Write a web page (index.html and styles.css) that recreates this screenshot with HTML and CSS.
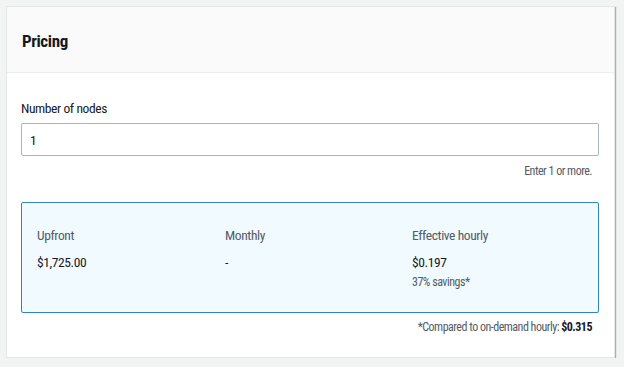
FILE: index.html
```html
<!DOCTYPE html>
<html lang="en">
<head>
    <meta charset="UTF-8">
    <title>Pricing</title>
    <link rel="stylesheet" href="styles.css">
</head>
<body>
    <section class="card">
        <header class="card-header">
            <h2>Pricing</h2>
        </header>
        <div class="card-body">
            <label class="field-label" for="nodes">Number of nodes</label>
            <input id="nodes" class="field-input" type="text" value="1">
            <div class="field-hint">Enter 1 or more.</div>

            <div class="summary">
                <div class="summary-col">
                    <div class="summary-label">Upfront</div>
                    <div class="summary-value">$1,725.00</div>
                </div>
                <div class="summary-col">
                    <div class="summary-label">Monthly</div>
                    <div class="summary-value">-</div>
                </div>
                <div class="summary-col">
                    <div class="summary-label">Effective hourly</div>
                    <div class="summary-value">$0.197</div>
                    <div class="summary-note">37% savings*</div>
                </div>
            </div>

            <div class="footnote">*Compared to on-demand hourly: <strong>$0.315</strong></div>
        </div>
    </section>
</body>
</html>
```

FILE: styles.css
```css
:root {
    --page-bg: #f2f3f3;
    --card-bg: #ffffff;
    --header-bg: #fafafa;
    --border-color: #eaeded;
    --text-color: #16191f;
    --text-secondary: #545b64;
    --input-border: #aab7b8;
    --info-bg: #f1faff;
    --info-border: #3184c2;
}

* {
    margin: 0;
    padding: 0;
    box-sizing: border-box;
}

body {
    background-color: var(--page-bg);
    color: var(--text-color);
    font-family: "Roboto Condensed", Roboto, sans-serif;
    font-size: 13.5px;
    letter-spacing: -0.4px;
    padding: 6px 9px 0 6px;
}

.card {
    background-color: var(--card-bg);
    border: 1px solid #e4e6e6;
    box-shadow: 1px 1px 1px rgba(0, 22, 32, 0.3);
    height: 352px;
}

.card-header {
    background-color: var(--header-bg);
    border-bottom: 1px solid var(--border-color);
    height: 66px;
    padding: 23px 15px 0;
}

.card-header h2 {
    font-size: 17px;
    font-weight: bold;
    line-height: 22px;
}

.card-body {
    padding: 25px 15px 0 14px;
    display: flex;
    flex-direction: column;
}

.field-label {
    color: var(--text-color);
    line-height: 20px;
}

.field-input {
    margin-top: 5px;
    height: 33px;
    border: 1px solid var(--input-border);
    border-radius: 2px;
    padding: 0 8px;
    font: inherit;
    letter-spacing: inherit;
    color: var(--text-color);
}

.field-hint {
    align-self: flex-end;
    margin-top: 7px;
    margin-right: 7px;
    font-size: 12px;
    letter-spacing: -0.5px;
    line-height: 16px;
    color: var(--text-secondary);
}

.summary {
    margin-top: 23px;
    height: 111px;
    background-color: var(--info-bg);
    border: 1px solid var(--info-border);
    border-radius: 2px;
    padding: 22px 15px 0;
    display: grid;
    grid-template-columns: 188px 187px 1fr;
}

.summary-label {
    color: var(--text-secondary);
    line-height: 20px;
}

.summary-value {
    margin-top: 7px;
    line-height: 20px;
}

.summary-note {
    margin-top: 2px;
    font-size: 12px;
    letter-spacing: -0.5px;
    color: var(--text-secondary);
    line-height: 16px;
}

.footnote {
    align-self: flex-end;
    margin-top: 6px;
    margin-right: 7px;
    font-size: 12px;
    letter-spacing: -0.5px;
    line-height: 16px;
    color: var(--text-secondary);
}

.footnote strong {
    color: var(--text-color);
}
```
